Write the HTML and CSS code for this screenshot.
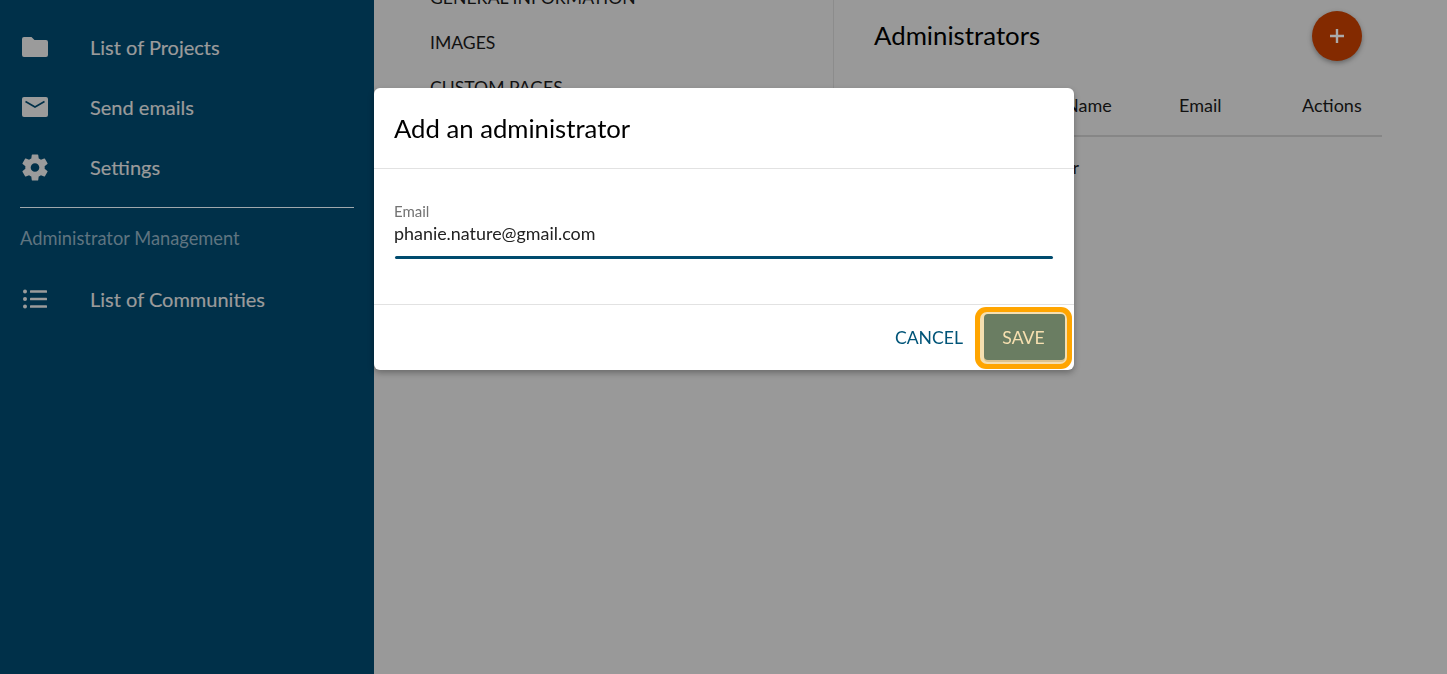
FILE: index.html
```html
<!DOCTYPE html>
<html lang="en">
<head>
  <meta charset="UTF-8">
  <title>Administrators</title>
  <link rel="stylesheet" href="styles.css">
</head>
<body>
<div class="page">
  <nav class="sidebar">
    <a class="nav-item">
      <svg class="nav-icon" viewBox="0 0 26 20"><path d="M2 0h7.5l3 3H24a2 2 0 0 1 2 2v13a2 2 0 0 1-2 2H2a2 2 0 0 1-2-2V2a2 2 0 0 1 2-2z"/></svg>
      <span>List of Projects</span>
    </a>
    <a class="nav-item">
      <svg class="nav-icon" viewBox="0 0 26 20"><rect width="26" height="20" rx="2"/><path class="groove" d="M3.5 4.5 13 10l9.5-5.5"/></svg>
      <span>Send emails</span>
    </a>
    <a class="nav-item">
      <svg class="nav-icon gear" viewBox="2.6 2 18.8 20"><path fill-rule="evenodd" d="M19.14 12.94c.04-.3.06-.61.06-.94 0-.32-.02-.64-.07-.94l2.03-1.58a.49.49 0 0 0 .12-.61l-1.92-3.32a.488.488 0 0 0-.59-.22l-2.39.96c-.5-.38-1.03-.7-1.62-.94l-.36-2.54a.484.484 0 0 0-.48-.41h-3.84c-.24 0-.43.17-.47.41l-.36 2.54c-.59.24-1.13.57-1.62.94l-2.39-.96c-.22-.08-.47 0-.59.22L2.74 8.87c-.12.21-.08.47.12.61l2.03 1.58c-.05.3-.09.63-.09.94s.02.64.07.94l-2.03 1.58a.49.49 0 0 0-.12.61l1.92 3.32c.12.22.37.29.59.22l2.39-.96c.5.38 1.03.7 1.62.94l.36 2.54c.05.24.24.41.48.41h3.84c.24 0 .44-.17.47-.41l.36-2.54c.59-.24 1.13-.56 1.62-.94l2.39.96c.22.08.47 0 .59-.22l1.92-3.32c.12-.22.07-.47-.12-.61l-2.01-1.58zM12 15.2a3.2 3.2 0 1 1 0-6.4 3.2 3.2 0 0 1 0 6.4z"/></svg>
      <span>Settings</span>
    </a>
    <div class="nav-divider"></div>
    <div class="nav-heading">Administrator Management</div>
    <a class="nav-item">
      <svg class="nav-icon list" viewBox="0 0 24 20"><circle cx="2" cy="2.5" r="2"/><circle cx="2" cy="10" r="2"/><circle cx="2" cy="17.5" r="2"/><rect x="7" y="1.2" width="17" height="2.6" rx=".6"/><rect x="7" y="8.7" width="17" height="2.6" rx=".6"/><rect x="7" y="16.2" width="17" height="2.6" rx=".6"/></svg>
      <span>List of Communities</span>
    </a>
  </nav>

  <main class="main">
    <ul class="tabs">
      <li>GENERAL INFORMATION</li>
      <li>IMAGES</li>
      <li>CUSTOM PAGES</li>
    </ul>
    <section class="admins">
      <div class="admins-head">
        <h2>Administrators</h2>
        <button class="fab" type="button">
          <svg viewBox="0 0 16 16"><path d="M8 1v14M1 8h14"/></svg>
        </button>
      </div>
      <div class="table-head">
        <span></span>
        <span>Name</span>
        <span>Email</span>
        <span>Actions</span>
      </div>
      <div class="table-row">Administrator</div>
    </section>
  </main>
</div>

<div class="dialog">
  <h1 class="dialog-title">Add an administrator</h1>
  <div class="dialog-body">
    <label class="field-label">Email</label>
    <div class="field-value">phanie.nature@gmail.com</div>
    <div class="field-line"></div>
  </div>
  <div class="dialog-actions">
    <button class="btn-cancel" type="button">CANCEL</button>
    <button class="btn-save" type="button">SAVE</button>
  </div>
</div>
</body>
</html>
```

FILE: styles.css
```css
html, body {
  margin: 0;
  height: 100%;
  overflow: hidden;
}

body {
  font-family: Lato, "Open Sans", sans-serif;
  color: #111;
  background-color: #999;
}

.page {
  display: flex;
  height: 100%;
}

/* sidebar */
.sidebar {
  width: 374px;
  flex-shrink: 0;
  padding-top: 17px;
  box-sizing: border-box;
  background-color: #003049;
  color: #9b9b9b;
}

.nav-item {
  display: flex;
  align-items: center;
  height: 60px;
  padding-left: 22px;
  font-size: 20px;
  -webkit-text-stroke: .2px #9b9b9b;
}

.nav-icon {
  width: 26px;
  height: 20px;
  margin-right: 42px;
  fill: #9b9b9b;
}

.nav-icon.gear {
  height: 27px;
}

.nav-icon .groove {
  fill: none;
  stroke: #003049;
  stroke-width: 1.6;
}

.nav-divider {
  height: 1px;
  margin: 10px 20px 0;
  background-color: #9fa8ad;
}

.nav-heading {
  height: 61px;
  padding: 19px 20px 0;
  box-sizing: border-box;
  font-size: 18.3px;
  color: #5f7480;
}

/* page behind the dialog */
.main {
  display: flex;
  flex: 1;
  align-items: flex-start;
}

.tabs {
  width: 460px;
  height: 200px;
  flex-shrink: 0;
  margin: -24px 0 0;
  padding: 0 0 0 56px;
  box-sizing: border-box;
  list-style: none;
  font-size: 17.6px;
  color: #111;
  border-right: 1px solid #8c8c8c;
}

.tabs li {
  height: 45px;
  line-height: 44px;
}

.admins {
  width: 508px;
  margin-left: 40px;
}

.admins-head {
  display: flex;
  align-items: center;
  justify-content: space-between;
  height: 72px;
  padding-right: 20px;
}

.admins-head h2 {
  margin: 0 0 2px;
  line-height: 70px;
  font-size: 25.8px;
  font-weight: 400;
  color: #000;
}

.fab {
  width: 50px;
  height: 50px;
  padding: 0;
  border: 0;
  border-radius: 50%;
  background-color: #832a00;
  box-shadow: 0 2px 5px rgba(0, 0, 0, .35);
}

.fab svg {
  display: block;
  width: 16px;
  height: 16px;
  margin: auto;
  fill: none;
  stroke: #aaa;
  stroke-width: 2.4;
}

.table-head {
  display: grid;
  grid-template-columns: 191px 114px 123px 80px;
  height: 63px;
  line-height: 66px;
  font-size: 18px;
  color: #111;
  border-bottom: 2px solid #868686;
}

.table-row {
  width: 205px;
  padding-top: 20px;
  line-height: 22px;
  font-size: 17px;
  text-align: right;
}

/* dialog */
.dialog {
  position: fixed;
  left: 374px;
  top: 88px;
  width: 700px;
  height: 282px;
  display: flex;
  flex-direction: column;
  border-radius: 6px;
  background-color: #fff;
  box-shadow: 0 3px 6px rgba(0, 0, 0, .3);
}

.dialog-title {
  height: 81px;
  margin: 0;
  padding: 0 20px;
  box-sizing: border-box;
  line-height: 81px;
  font-size: 25.7px;
  font-weight: 400;
  color: #000;
  border-bottom: 1px solid #e2e2e2;
}

.dialog-body {
  height: 136px;
  padding: 34px 20px 0;
  box-sizing: border-box;
  border-bottom: 1px solid #e2e2e2;
}

.field-label {
  display: block;
  line-height: 17px;
  font-size: 15px;
  color: #737373;
}

.field-value {
  margin-top: 1px;
  line-height: 24px;
  font-size: 17.9px;
  color: #222;
}

.field-line {
  height: 3px;
  margin: 11px 1px 0;
  border-radius: 2px;
  background-color: #004b6e;
}

.dialog-actions {
  display: flex;
  flex: 1;
  align-items: center;
  justify-content: flex-end;
  gap: 21px;
  padding-right: 9px;
}

.dialog-actions button {
  padding: 0;
  border: 0;
  font-family: inherit;
  font-size: 17.6px;
}

.btn-cancel {
  background: none;
  color: #005478;
}

.dialog-actions .btn-save {
  align-self: flex-start;
  width: 81px;
  height: 46px;
  margin-top: 9px;
  padding-right: 2px;
  border-radius: 4px;
  background-color: #6a7d62;
  color: #f7e0b0;
  box-shadow: 0 2px 0 #dcc38e, -1px 1px 0 3px #f5dfb0, -1px 1px 0 8px #ffa500;
}
```
